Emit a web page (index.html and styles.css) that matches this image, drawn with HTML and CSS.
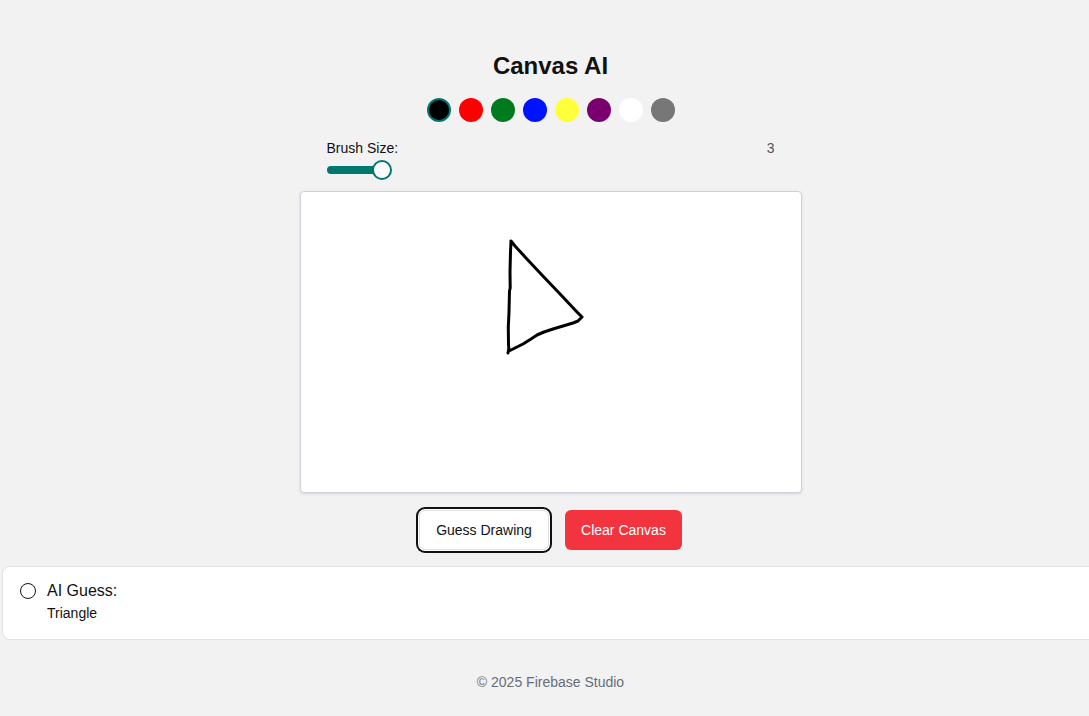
FILE: index.html
```html
<!DOCTYPE html>
<html lang="en">
<head>
<meta charset="utf-8">
<title>Canvas AI</title>
<link rel="stylesheet" href="styles.css">
</head>
<body>
<main class="app">
  <h1 class="title">Canvas AI</h1>
  <div class="palette">
    <span class="swatch swatch-black selected"></span>
    <span class="swatch swatch-red"></span>
    <span class="swatch swatch-green"></span>
    <span class="swatch swatch-blue"></span>
    <span class="swatch swatch-yellow"></span>
    <span class="swatch swatch-purple"></span>
    <span class="swatch swatch-white"></span>
    <span class="swatch swatch-gray"></span>
  </div>
  <div class="brush">
    <div class="brush-row">
      <span class="brush-label">Brush Size:</span>
      <span class="brush-value">3</span>
    </div>
    <div class="slider">
      <span class="slider-track"></span>
      <span class="slider-thumb"></span>
    </div>
  </div>
  <div class="canvas">
    <svg width="500" height="300" viewBox="0 0 500 300" xmlns="http://www.w3.org/2000/svg">
      <path d="M210 49 L209.5 60 L209 80 L209.2 96 L208.5 99 L208 120 L207.3 135 L207.5 152 L207.8 157 L207 161 M208 159 L214 156 L222 152 L230 147 L236 143 L243 140 L252 137 L262 134 L272 131 L277 129 L281 125 L276 120 L260 103 L240 82 L225 66 L214 54 L210 49" fill="none" stroke="#000" stroke-width="3" stroke-linejoin="round" stroke-linecap="round"/>
    </svg>
  </div>
  <div class="actions">
    <button class="btn btn-outline focused">Guess Drawing</button>
    <button class="btn btn-danger">Clear Canvas</button>
  </div>
  <section class="result">
    <span class="result-icon"></span>
    <div class="result-text">
      <div class="result-title">AI Guess:</div>
      <div class="result-value">Triangle</div>
    </div>
  </section>
  <footer class="footer">© 2025 Firebase Studio</footer>
</main>
</body>
</html>
```

FILE: styles.css
```css
* { box-sizing: border-box; }
html, body { overflow: hidden; }
body {
  margin: 0;
  background: #f2f2f2;
  font-family: "Liberation Sans", Arial, sans-serif;
  color: #111;
}
.app {
  display: flex;
  flex-direction: column;
  align-items: center;
  width: 1101px;
  padding-top: 50px;
  min-height: 716px;
}
.title {
  margin: 0;
  font-size: 24px;
  line-height: 32px;
  font-weight: 700;
  color: #111;
}
.palette {
  display: flex;
  gap: 8px;
  margin-top: 16px;
}
.swatch {
  width: 24px;
  height: 24px;
  border-radius: 50%;
  display: block;
}
.swatch.selected { border: 2px solid #00776f; }
.swatch-black { background: #000; }
.swatch-red { background: #ff0000; }
.swatch-green { background: #007a1e; }
.swatch-blue { background: #0012ff; }
.swatch-yellow { background: #ffff3c; }
.swatch-purple { background: #7a006f; }
.swatch-white { background: #fff; }
.swatch-gray { background: #777; }
.brush {
  width: 448px;
  margin-top: 16px;
}
.brush-row {
  display: flex;
  justify-content: space-between;
  font-size: 14px;
  line-height: 20px;
}
.brush-label { color: #111; }
.brush-value { color: #555; }
.slider {
  position: relative;
  height: 20px;
  margin-top: 2px;
  width: 66px;
}
.slider-track {
  position: absolute;
  left: 0;
  top: 6px;
  width: 56px;
  height: 8px;
  border-radius: 4px;
  background: #00776f;
}
.slider-thumb {
  position: absolute;
  left: 45px;
  top: 0;
  width: 20px;
  height: 20px;
  border-radius: 50%;
  background: #fff;
  border: 2px solid #00776f;
}
.canvas {
  margin-top: 11px;
  width: 502px;
  height: 302px;
  background: #fff;
  border: 1px solid #cdd1d8;
  border-radius: 4px;
  box-shadow: 0 1px 3px rgba(0,0,0,0.12);
}
.canvas svg { display: block; }
.actions {
  display: flex;
  gap: 16px;
  margin-top: 17px;
}
.btn {
  height: 40px;
  padding: 0 16px;
  border-radius: 6px;
  font-family: inherit;
  font-size: 14px;
  cursor: pointer;
}
.btn-outline {
  width: 130px;
  background: #fff;
  border: 1px solid #e0e0e0;
  color: #111;
}
.btn-outline.focused {
  box-shadow: 0 0 0 1px #fff, 0 0 0 3px #111;
}
.btn-danger {
  width: 117px;
  background: #f3343f;
  border: none;
  color: #fff;
}
.result {
  align-self: stretch;
  margin: 16px 0 0 2px;
  height: 74px;
  background: #fff;
  border: 1px solid #e2e2e2;
  border-radius: 8px;
  display: flex;
  align-items: flex-start;
  gap: 11px;
  padding: 14px 17px;
}
.result-icon {
  width: 16px;
  height: 16px;
  border: 1.6px solid #111;
  border-radius: 50%;
  margin-top: 2px;
  flex: none;
}
.result-title {
  font-size: 16px;
  line-height: 20px;
  color: #111;
}
.result-value {
  font-size: 14px;
  line-height: 20px;
  margin-top: 2px;
  color: #111;
}
.footer {
  margin-top: 32px;
  font-size: 14px;
  line-height: 20px;
  color: #676d78;
}
```
